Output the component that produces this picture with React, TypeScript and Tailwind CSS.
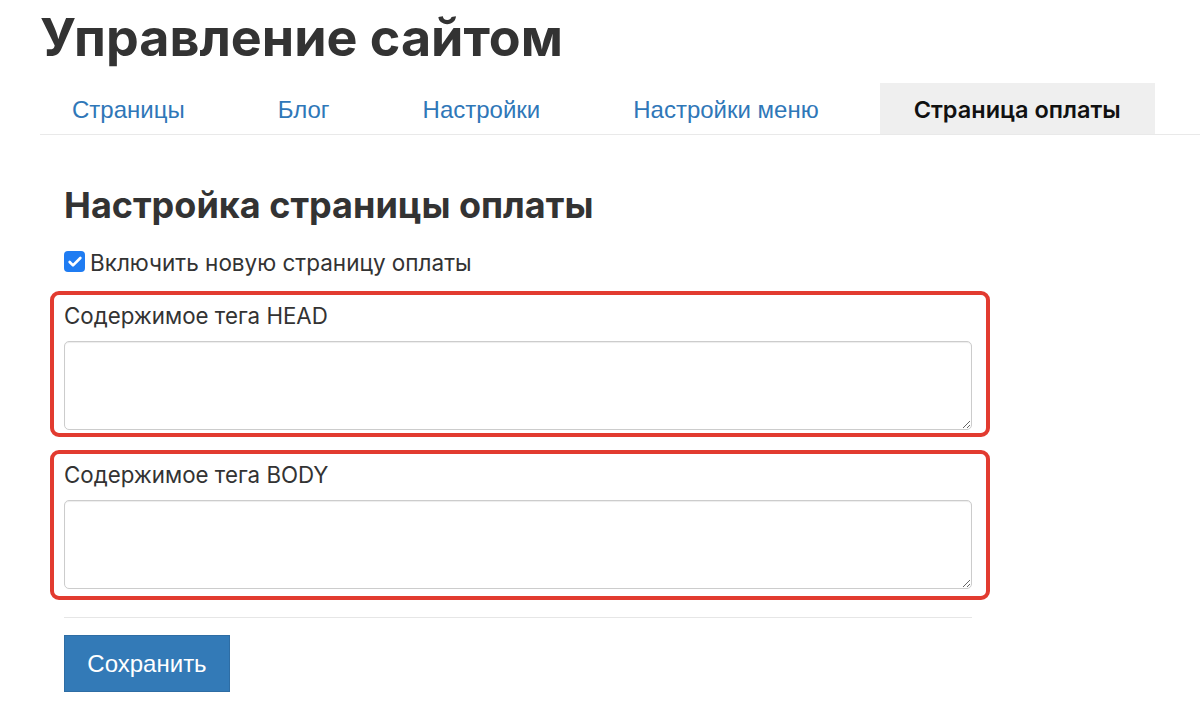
import { Check } from "lucide-react";

const tabs = ["Страницы", "Блог", "Настройки", "Настройки меню"];

function TagField({ label, bottom }: { label: string; bottom: string }) {
  return (
    <div className={`w-[940px] rounded-[9px] border-4 border-[#e23b30] pl-[10px] pr-[14px] pt-[8px] ${bottom}`}>
      <label className="block font-['Inter',sans-serif] text-[22.3px] leading-[26px] text-[#333]">{label}</label>
      <textarea className="mt-[12px] block h-[89px] w-[908px] rounded-[5px] border border-[#cccccc] bg-white shadow-[inset_0_1px_1px_rgba(0,0,0,0.075)] outline-none" />
    </div>
  );
}

export default function App() {
  return (
    <div className="min-h-[709px] w-[1200px] overflow-hidden bg-white pl-[40px]">
      <h1 className="mt-[5px] font-['Inter',sans-serif] text-[52px] font-bold leading-[65px] text-[#333]">
        Управление сайтом
      </h1>

      <ul className="mt-[13px] flex gap-[29px] border-b border-[#e9e9e9]">
        {tabs.map((t) => (
          <li key={t} className="h-[51px] px-[32px] pt-[14px] font-['Liberation_Sans',sans-serif] text-[24px] leading-[26px] text-[#2f77b8]">
            {t}
          </li>
        ))}
        <li className="h-[51px] bg-[#efefef] px-[34px] pt-[14px] font-['Inter',sans-serif] text-[23.5px] font-semibold leading-[26px] text-[#111]">
          Страница оплаты
        </li>
      </ul>

      <div className="pl-[10px]">
        <h2 className="ml-[14px] mt-[50px] font-['Inter',sans-serif] text-[36px] font-bold leading-[40px] text-[#333]">
          Настройка страницы оплаты
        </h2>

        <label className="ml-[14px] mt-[25px] flex items-start gap-[5px] font-['Inter',sans-serif] text-[22.5px] leading-[26px] text-[#333]">
          <span className="mt-[1px] flex size-[21px] items-center justify-center rounded-[4px] bg-[#1f7cf2]">
            <Check className="size-[16px] text-white" strokeWidth={4} />
          </span>
          Включить новую страницу оплаты
        </label>

        <div className="mt-[15px] flex flex-col gap-[13px]">
          <TagField label="Содержимое тега HEAD" bottom="pb-[3px]" />
          <TagField label="Содержимое тега BODY" bottom="pb-[7px]" />
        </div>

        <div className="ml-[14px] mt-[17px] h-px w-[908px] bg-[#e6e6e6]" />

        <button className="ml-[14px] mt-[17px] h-[57px] w-[166px] border border-[#2e6da4] bg-[#337ab7] font-['Liberation_Sans',sans-serif] text-[24px] text-white">
          Сохранить
        </button>
      </div>
    </div>
  );
}
